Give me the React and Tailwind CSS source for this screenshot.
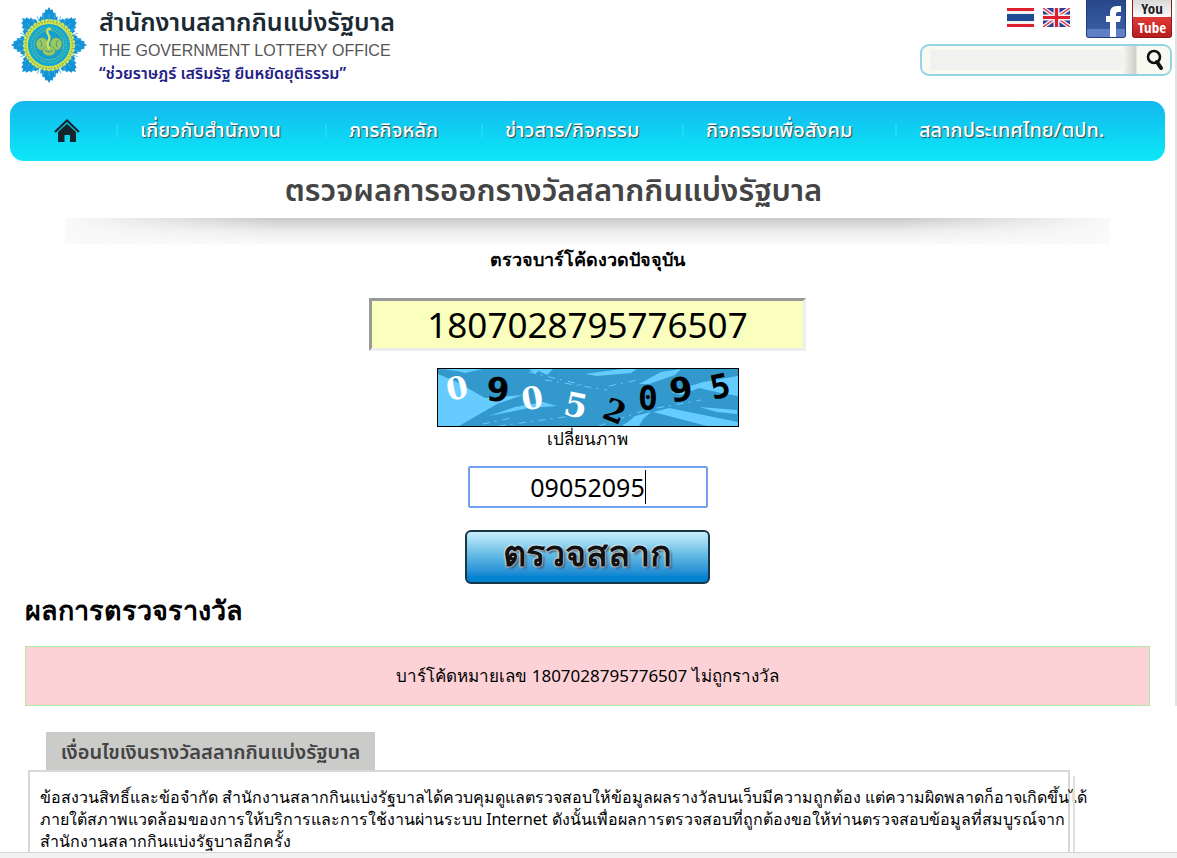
import { useState } from "react";

const navItems = [
  "เกี่ยวกับสำนักงาน",
  "ภารกิจหลัก",
  "ข่าวสาร/กิจกรรม",
  "กิจกรรมเพื่อสังคม",
  "สลากประเทศไทย/ตปท.",
];

// Serrated eight-pointed star: each ray is made of stepped teeth around its tip.
const starPoints = (() => {
  const tips = [30, 33, 36, 38, 36, 33, 30];
  const pts = [];
  for (let ray = 0; ray < 8; ray++) {
    tips.forEach((r, i) => {
      const step = 45 / 8;
      const tip = ((ray * 45 + (i - 3) * step - 90) * Math.PI) / 180;
      const notch = ((ray * 45 + (i - 2.5) * step - 90) * Math.PI) / 180;
      const inner = i === 6 ? 25 : Math.min(r, tips[i + 1]) - 1;
      pts.push(`${(38 + r * Math.cos(tip)).toFixed(1)},${(38 + r * Math.sin(tip)).toFixed(1)}`);
      pts.push(`${(38 + inner * Math.cos(notch)).toFixed(1)},${(38 + inner * Math.sin(notch)).toFixed(1)}`);
    });
  }
  return pts.join(" ");
})();

function Emblem() {
  return (
    <svg viewBox="0 0 76 76" className="size-[76px] shrink-0" aria-hidden="true">
      <polygon points={starPoints} fill="#1593d6" />
      <g stroke="#38b6ec" strokeWidth="0.8">
        {Array.from({ length: 32 }, (_, i) => (
          <line key={i} x1="38" y1="12" x2="38" y2="7" transform={`rotate(${i * 11.25} 38 38)`} />
        ))}
      </g>
      <circle cx="38" cy="38" r="25" fill="#cfe04c" stroke="#d9e65a" strokeWidth="2" strokeDasharray="3 1.2" />
      <circle cx="38" cy="38" r="23.5" fill="none" stroke="#7eb65c" strokeWidth="1.4" strokeDasharray="1.5 1.5" />
      <circle cx="38" cy="38" r="21" fill="#12a5d6" />
      <circle cx="38" cy="38" r="17.5" fill="none" stroke="#59bd9c" strokeWidth="1.6" strokeDasharray="1.5 1.2" />
      <circle cx="38" cy="38" r="15" fill="#139fd0" stroke="#7fc977" strokeWidth="0.8" />
      <g fill="#9cc861" stroke="#3e9a8c" strokeWidth="0.7">
        <ellipse cx="31" cy="37" rx="6" ry="6.5" />
        <ellipse cx="45" cy="37" rx="6" ry="6.5" />
        <ellipse cx="38" cy="44" rx="6.5" ry="5" />
      </g>
      <path d="M38 41 C33 36 42 32 37 27 C35 24 37 21 39 22" fill="none" stroke="#d5e05a" strokeWidth="2.4" strokeLinecap="round" />
      <path d="M34 43 q4 4 8 0 M29 33 q3 3 1 7 M47 33 q-3 3 -1 7" fill="none" stroke="#2b8b8b" strokeWidth="0.8" />
    </svg>
  );
}

function ThaiFlag() {
  return (
    <svg viewBox="0 0 27 19" className="h-[19px] w-[27px]" role="img" aria-label="ไทย">
      <rect width="27" height="19" fill="#f4f4f6" />
      <rect width="27" height="3" fill="#e0202f" />
      <rect y="6" width="27" height="7" fill="#1d4c94" />
      <rect y="16" width="27" height="3" fill="#e0202f" />
    </svg>
  );
}

function UkFlag() {
  return (
    <svg viewBox="0 0 27 19" className="h-[19px] w-[27px]" role="img" aria-label="English">
      <rect width="27" height="19" fill="#2b3f94" />
      <path d="M0 0 L27 19 M27 0 L0 19" stroke="#f3f3f8" strokeWidth="4" />
      <path d="M0 0 L27 19 M27 0 L0 19" stroke="#e0303c" strokeWidth="1.4" />
      <path d="M13.500 0 V19 M0 9.500 H27" stroke="#f3f3f8" strokeWidth="6" />
      <path d="M13.500 0 V19 M0 9.500 H27" stroke="#dd1f30" strokeWidth="3.200" />
    </svg>
  );
}

function FacebookIcon() {
  return (
    <svg viewBox="0 0 40 38" className="h-[38px] w-10" aria-hidden="true">
      <defs>
        <linearGradient id="fb" x1="0" y1="0" x2="0" y2="1">
          <stop offset="0" stopColor="#27478a" />
          <stop offset="1" stopColor="#3d60a8" />
        </linearGradient>
      </defs>
      <path d="M0 0 H40 V35 Q40 38 37 38 H3 Q0 38 0 35 Z" fill="#1f3c7c" />
      <path d="M1 0 H39 V35 Q39 37 37 37 H3 Q1 37 1 35 Z" fill="url(#fb)" />
      <path d="M1 29 H39 V35 Q39 37 37 37 H3 Q1 37 1 35 Z" fill="#5f80c4" />
      <path d="M24 37 V22 H20 V16 H24 V13 Q24 6 31 6 H35 V12 H32 Q30 12 30 14 V16 H35 L34 22 H30 V37 Z" fill="#fff" />
    </svg>
  );
}

function YoutubeIcon() {
  return (
    <svg viewBox="0 0 40 38" className="h-[38px] w-10" role="img" aria-label="YouTube">
      <defs>
        <linearGradient id="ytTop" x1="0" y1="0" x2="0" y2="1">
          <stop offset="0" stopColor="#d8d8d8" />
          <stop offset="1" stopColor="#fbfbfb" />
        </linearGradient>
        <linearGradient id="ytRed" x1="0" y1="0" x2="0" y2="1">
          <stop offset="0" stopColor="#e03a37" />
          <stop offset="1" stopColor="#b81d1d" />
        </linearGradient>
      </defs>
      <path d="M0 0 H40 V35 Q40 38 37 38 H3 Q0 38 0 35 Z" fill="#8d1a1a" />
      <rect x="1" y="0" width="38" height="17" fill="url(#ytTop)" />
      <path d="M1 17 H39 V35 Q39 37 37 37 H3 Q1 37 1 35 Z" fill="url(#ytRed)" />
      <text x="20" y="14" textAnchor="middle" className="font-['Open_Sans_Condensed','Roboto',sans-serif] text-[15px] font-bold" fill="#222">You</text>
      <text x="20" y="33" textAnchor="middle" className="font-['Open_Sans_Condensed','Roboto',sans-serif] text-[15px] font-bold" fill="#fff">Tube</text>
    </svg>
  );
}

function Captcha() {
  return (
    <svg viewBox="0 0 302 59" className="h-[59px] w-[302px]" role="img" aria-label="captcha">
      <rect width="302" height="59" fill="#3399cc" />
      <g fill="#66ccff">
        <path d="M1 6 L20 14 L48 30 L86 27 L60 36 L22 58 H1 Z" />
        <path d="M4 1 H46 L28 5 L20 3 Z M92 1 H116 L110 7 L102 3 L98 6 Z" />
        <path d="M52 48 L78 39 L106 34 L120 38 L92 40 Z" />
        <path d="M148 6 L184 1 H200 L194 5 L160 8 Z" />
        <path d="M202 16 L224 4 L244 1 L238 7 L212 16 Z" />
        <path d="M234 24 L266 14 L301 8 V28 L284 25 L262 20 L244 27 Z" />
        <path d="M216 44 L232 40 L301 54 V58 H270 Z" />
        <path d="M186 58 L198 48 L214 44 L206 51 L202 58 Z" />
        <path d="M262 39 L300 42 V46 L280 44 Z" />
      </g>
      <g stroke="#66ccff" fill="none" strokeDasharray="7 5 2 6">
        <path d="M62 58 L134 48 M92 4 L150 18 M108 12 L170 22 M172 18 L200 12 M162 58 L214 40 M186 57 L208 48 M12 54 L30 42 M220 40 L264 32 M46 56 L74 50" />
      </g>
      <g className="font-['DejaVu_Sans',sans-serif] text-[33px] font-bold" textAnchor="middle">
        <text x="20" y="31" fill="#fff" className="font-['DejaVu_Serif',serif] text-[31px] font-bold" transform="rotate(-12 20 20)">0</text>
        <text x="61" y="33" transform="rotate(3 61 21)">9</text>
        <text x="95" y="41" fill="#fff" className="font-['DejaVu_Serif',serif] text-[31px] font-bold" transform="rotate(-10 95 29)">0</text>
        <text x="139" y="49" fill="#fff" className="font-['DejaVu_Serif',serif] text-[33px] font-bold" transform="rotate(12 139 37)">5</text>
        <text x="178" y="54" className="font-['DejaVu_Serif',serif] text-[31px] font-bold" transform="rotate(22 178 43)">2</text>
        <text x="211" y="42" className="font-['DejaVu_Sans_Mono',monospace]">0</text>
        <text x="244" y="33" transform="rotate(-10 244 21)">9</text>
        <text x="283" y="30" className="font-['DejaVu_Sans_Mono',monospace]" transform="rotate(-12 283 18)">5</text>
      </g>
      <rect x="0.5" y="0.5" width="301" height="58" fill="none" stroke="#000" />
    </svg>
  );
}

function Header() {
  return (
    <header className="flex h-[101px] justify-between pr-[3px] pl-[11px]">
      <a href="#home" className="flex gap-3 pt-[7px]">
        <Emblem />
        <span className="flex flex-col">
          <span className="font-['Noto_Sans_Thai','Noto_Sans',sans-serif] text-[25px] leading-8 font-semibold text-[#1b2a33]">สำนักงานสลากกินแบ่งรัฐบาล</span>
          <span className="font-['Liberation_Sans',sans-serif] text-base leading-6 text-[#555]">THE GOVERNMENT LOTTERY OFFICE</span>
          <span className="font-['Noto_Sans_Thai','Noto_Sans',sans-serif] text-base leading-[22px] font-semibold text-[#1f2186]">“ช่วยราษฎร์ เสริมรัฐ ยืนหยัดยุติธรรม”</span>
        </span>
      </a>
      <div className="flex flex-col items-end gap-1.5">
        <div className="flex items-start">
          <a href="#th" className="mt-2 mr-[9px]"><ThaiFlag /></a>
          <a href="#en" className="mt-2 mr-4"><UkFlag /></a>
          <a href="#facebook" aria-label="Facebook" className="mr-1.5"><FacebookIcon /></a>
          <a href="#youtube"><YoutubeIcon /></a>
        </div>
        <form className="flex h-8 w-[252px] items-stretch overflow-hidden rounded-[9px] border-2 border-[#92d3e9] bg-[#f8faf0]" onSubmit={(e) => e.preventDefault()}>
          <input type="text" aria-label="ค้นหา" className="my-1 ml-2 w-[192px] bg-[#f1f1ef] outline-none" />
          <button type="submit" aria-label="ค้นหา" className="flex flex-1 items-center justify-center bg-linear-to-r from-[#f8faf0] via-[#cfd0ca] via-28% to-[#f8faf0] to-32% pl-[18px]">
            <svg viewBox="0 0 20 22" className="h-[22px] w-5" fill="none" stroke="#111" aria-hidden="true">
              <circle cx="9" cy="8" r="6" strokeWidth="2.600" />
              <path d="M12 13 L16 19" strokeWidth="4" strokeLinecap="round" />
            </svg>
          </button>
        </form>
      </div>
    </header>
  );
}

function NavBar() {
  return (
    <nav className="mr-2.5 ml-2.5 grid h-[60px] grid-cols-[106fr_209fr_156fr_201fr_213fr_270fr] items-center rounded-[14px] bg-linear-to-b from-[#14b8ee] to-[#0de8f7]">
      <a href="#home" aria-label="หน้าแรก" className="pl-11">
        <svg viewBox="0 0 26 24" className="h-6 w-[26px]" aria-hidden="true">
          <path d="M1 13 L13 1.500 L25 13" fill="none" stroke="#14262b" strokeWidth="2.200" />
          <path d="M4 13 L13 4.800 L22 13 V23 H16 V16 H10.500 V23 H4 Z" fill="#14262b" />
        </svg>
      </a>
      {navItems.map((item) => (
        <a key={item} href={`#${item}`} className="flex h-3.5 items-center border-l-2 border-[#21d9f7] pl-[22px] font-['Noto_Sans_Thai','Noto_Sans',sans-serif] text-xl font-medium whitespace-nowrap text-white [text-shadow:1px_1px_1px_#33444c]">
          {item}
        </a>
      ))}
    </nav>
  );
}

function CheckForm() {
  const [barcode, setBarcode] = useState("1807028795776507");
  const [code, setCode] = useState("09052095");
  return (
    <form className="flex flex-col items-center" onSubmit={(e) => e.preventDefault()}>
      <label htmlFor="barcode" className="text-lg leading-[30px] font-bold">ตรวจบาร์โค้ดงวดปัจจุบัน</label>
      <input
        id="barcode"
        value={barcode}
        onChange={(e) => setBarcode(e.target.value)}
        className="mt-6 h-[53px] w-[437px] border-3 border-t-[#999] border-r-[#eee] border-b-[#eee] border-l-[#999] bg-[#faffbd] text-center text-[35px] outline-none"
      />
      <div className="mt-[17px]"><Captcha /></div>
      <a href="#refresh" className="text-[17px] leading-6">เปลี่ยนภาพ</a>
      <div className="relative mt-[15px]">
        <input
          aria-label="รหัสจากภาพ"
          value={code}
          onChange={(e) => setCode(e.target.value)}
          className="block h-[42px] w-60 rounded-xs border-2 border-[#70a0ee] bg-white text-center text-[25px] caret-transparent outline-none"
        />
        <span className="absolute top-1 right-[62px] h-[34px] w-px bg-black" />
      </div>
      <button type="submit" className="mt-[22px] h-[54px] w-[245px] rounded-md border-2 border-[#173748] bg-linear-to-b from-[#c8effc] via-[#64bce5] via-45% to-[#0083d0] to-90% pb-2 text-4xl leading-none font-bold text-[#111] [text-shadow:0_0_2px_#fff,0_0_2px_#fff,2px_2px_2px_#456]">
        ตรวจสลาก
      </button>
    </form>
  );
}

export default function App() {
  return (
    <div className="flex min-h-screen flex-col overflow-x-hidden bg-white font-['Noto_Sans',sans-serif] text-black">
      <div className="border-r-2 border-[#e2e2e2]">
        <Header />
        <NavBar />
        <main className="px-[25px]">
          <h1 className="mr-[68px] pt-1 text-center font-['Noto_Sans_Thai','Noto_Sans',sans-serif] text-[31px] leading-[53px] font-semibold text-[#444]">
            ตรวจผลการออกรางวัลสลากกินแบ่งรัฐบาล
          </h1>
          <div className="mx-10 bg-[#fafafa]">
            <div className="h-[26px] bg-linear-to-b from-[#c9c9c8] via-[#ececec] to-[#fafafa] mask-x-from-80% mask-x-to-100%" />
          </div>
          <CheckForm />
          <h2 className="mt-1.5 text-[27px] leading-10 font-bold">ผลการตรวจรางวัล</h2>
          <p className="mt-4 border border-[#aeeaa0] bg-[#fcd2d7] text-center text-[17px] leading-[58px]">
            บาร์โค้ดหมายเลข 1807028795776507 ไม่ถูกรางวัล
          </p>
        </main>
      </div>
      <section className="flex flex-1 flex-col pt-[26px] pl-7">
        <h3 className="ml-[18px] w-[329px] bg-[#cbcbc9] pt-1 text-center font-['Noto_Sans_Thai','Noto_Sans',sans-serif] text-xl leading-[34px] font-semibold text-[#444]">
          เงื่อนไขเงินรางวัลสลากกินแบ่งรัฐบาล
        </h3>
        <div className="mr-[102px] flex flex-1">
          <p className="min-w-0 flex-1 border-2 border-b-0 border-[#d8d8d8] pt-[14px] pl-[10px] text-base leading-[22px] whitespace-nowrap">
            ข้อสงวนสิทธิ์และข้อจำกัด สำนักงานสลากกินแบ่งรัฐบาลได้ควบคุมดูแลตรวจสอบให้ข้อมูลผลรางวัลบนเว็บมีความถูกต้อง แต่ความผิดพลาดก็อาจเกิดขึ้นได้
            <br />
            ภายใต้สภาพแวดล้อมของการให้บริการและการใช้งานผ่านระบบ Internet ดังนั้นเพื่อผลการตรวจสอบที่ถูกต้องขอให้ท่านตรวจสอบข้อมูลที่สมบูรณ์จาก
            <br />
            สำนักงานสลากกินแบ่งรัฐบาลอีกครั้ง
          </p>
          <span className="mt-1.5 ml-[3px] w-0.5 shrink-0 bg-[#e0e0e0]" />
        </div>
      </section>
      <footer className="h-[7px] border-t border-[#d4d4d4] bg-[#f1f1f1]" />
    </div>
  );
}
